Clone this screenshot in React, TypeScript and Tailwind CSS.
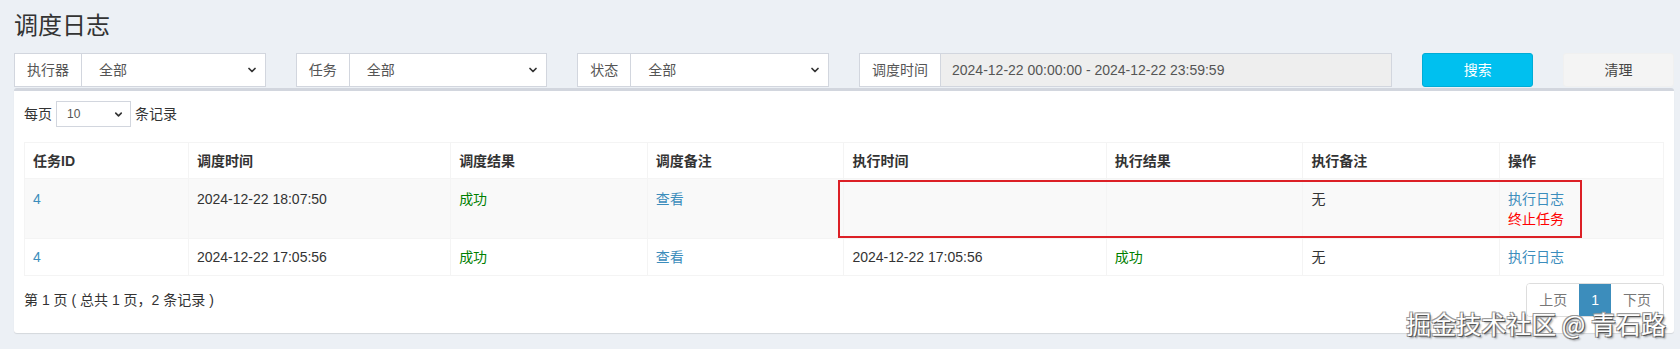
import React from "react";
import { ChevronDown } from "lucide-react";

const FONT = { fontFamily: '"Liberation Sans", Arial, "Noto Sans CJK SC", sans-serif' };

function SelectBox({ label, value }: { label: string; value: string }) {
  return (
    <div className="flex h-[34px] text-[14px]">
      <div className="flex items-center px-[12px] border border-[#d2d6de] bg-white text-[#555] whitespace-nowrap">
        {label}
      </div>
      <div className="flex-1 flex items-center justify-between pl-[17px] pr-[7px] border border-l-0 border-[#d2d6de] bg-white text-[#555]">
        <span>{value}</span>
        <ChevronDown size={12} strokeWidth={3.5} className="text-[#333]" />
      </div>
    </div>
  );
}

const th = "border border-[#f4f4f4] px-[8px] text-left font-bold text-[#333] align-middle";
const td = "border border-[#f4f4f4] px-[8px] text-left";
const tdTop = "border border-[#f4f4f4] px-[8px] text-left align-top pt-[10px]";

export default function App() {
  return (
    <div className="relative w-[1680px] h-[349px] bg-[#ecf0f5] overflow-hidden text-[#333]" style={FONT}>
      <div className="pl-[14px] w-[1674px] pt-[12px]">
        <h1 className="text-[24px] leading-[28px] font-normal text-[#333]">调度日志</h1>
        <div className="mt-[13px] grid grid-cols-12 gap-x-[30px]">
          <div className="col-span-2">
            <SelectBox label="执行器" value="全部" />
          </div>
          <div className="col-span-2">
            <SelectBox label="任务" value="全部" />
          </div>
          <div className="col-span-2">
            <SelectBox label="状态" value="全部" />
          </div>
          <div className="col-span-4 flex h-[34px] text-[14px]">
            <div className="flex items-center px-[12px] border border-[#d2d6de] bg-white text-[#555] whitespace-nowrap">
              调度时间
            </div>
            <div className="flex-1 flex items-center pl-[11px] border border-l-0 border-[#d2d6de] bg-[#eeeeee] text-[#555]">
              2024-12-22 00:00:00 - 2024-12-22 23:59:59
            </div>
          </div>
          <div className="col-span-1">
            <div className="h-[34px] flex items-center justify-center rounded-[3px] bg-[#00c0ef] border border-[#00acd6] text-white text-[14px]">
              搜索
            </div>
          </div>
          <div className="col-span-1">
            <div className="h-[34px] flex items-center justify-center rounded-[3px] bg-[#f4f4f4] border border-[#f0f0f0] text-[#444] text-[14px]">
              清理
            </div>
          </div>
        </div>

        <div className="mt-px h-[245px] bg-white border-t-[3px] border-[#d2d6de] rounded-[3px] shadow-[0_1px_1px_rgba(0,0,0,0.1)] p-[10px]">
          <div className="flex items-center h-[26px] text-[14px]">
            <span>每页</span>
            <div className="ml-[4px] w-[75px] h-[26px] flex items-center justify-between pl-[10px] pr-[6px] border border-[#d2d6de] text-[12px] text-[#555]">
              <span>10</span>
              <ChevronDown size={11} strokeWidth={3.5} className="text-[#333]" />
            </div>
            <span className="ml-[4px]">条记录</span>
          </div>

          <table className="mt-[15px] w-[1640px] table-fixed border-collapse text-[14px] leading-[20px]">
            <colgroup>
              <col className="w-[10%]" />
              <col className="w-[16%]" />
              <col className="w-[12%]" />
              <col className="w-[12%]" />
              <col className="w-[16%]" />
              <col className="w-[12%]" />
              <col className="w-[12%]" />
              <col className="w-[10%]" />
            </colgroup>
            <thead>
              <tr className="h-[36px] bg-white">
                <th className={th}>任务ID</th>
                <th className={th}>调度时间</th>
                <th className={th}>调度结果</th>
                <th className={th}>调度备注</th>
                <th className={th}>执行时间</th>
                <th className={th}>执行结果</th>
                <th className={th}>执行备注</th>
                <th className={th}>操作</th>
              </tr>
            </thead>
            <tbody>
              <tr className="h-[60px] bg-[#f9f9f9]">
                <td className={`${tdTop} text-[#3c8dbc]`}>4</td>
                <td className={`${tdTop} text-[#333]`}>2024-12-22 18:07:50</td>
                <td className={`${tdTop} text-[#008000]`}>成功</td>
                <td className={`${tdTop} text-[#3c8dbc]`}>查看</td>
                <td className={tdTop}></td>
                <td className={tdTop}></td>
                <td className={`${tdTop} text-[#333]`}>无</td>
                <td className={tdTop}>
                  <div className="text-[#3c8dbc]">执行日志</div>
                  <div className="text-[#ff0000]">终止任务</div>
                </td>
              </tr>
              <tr className="h-[37px] bg-white">
                <td className={`${td} text-[#3c8dbc]`}>4</td>
                <td className={`${td} text-[#333]`}>2024-12-22 17:05:56</td>
                <td className={`${td} text-[#008000]`}>成功</td>
                <td className={`${td} text-[#3c8dbc]`}>查看</td>
                <td className={`${td} text-[#333]`}>2024-12-22 17:05:56</td>
                <td className={`${td} text-[#008000]`}>成功</td>
                <td className={`${td} text-[#333]`}>无</td>
                <td className={`${td} text-[#3c8dbc]`}>执行日志</td>
              </tr>
            </tbody>
          </table>

          <div className="mt-[7px] flex items-center justify-between h-[34px] text-[14px]">
            <span className="text-[#333]">第 1 页 ( 总共 1 页，2 条记录 )</span>
            <div className="flex h-[34px] border border-[#ddd] rounded-[4px] overflow-hidden">
              <div className="flex items-center px-[12px] bg-white text-[#777]">上页</div>
              <div className="flex items-center px-[12px] bg-[#3c8dbc] text-white">1</div>
              <div className="flex items-center px-[12px] bg-white text-[#777]">下页</div>
            </div>
          </div>
        </div>
      </div>

      <div className="absolute left-[838px] top-[180px] w-[744px] h-[58px] border-2 border-[#dc2026] pointer-events-none" />

      <div
        className="absolute right-[14px] top-[308px] text-[25px] leading-[30px] text-white whitespace-nowrap [text-shadow:1px_1px_0_#555,-1px_-1px_0_#999,1px_-1px_0_#999,-1px_1px_0_#999,2px_2px_2px_rgba(0,0,0,0.4)]"
        style={{ fontFamily: '"Noto Sans CJK SC", "Liberation Sans", sans-serif' }}
      >
        掘金技术社区 @ 青石路
      </div>
    </div>
  );
}
